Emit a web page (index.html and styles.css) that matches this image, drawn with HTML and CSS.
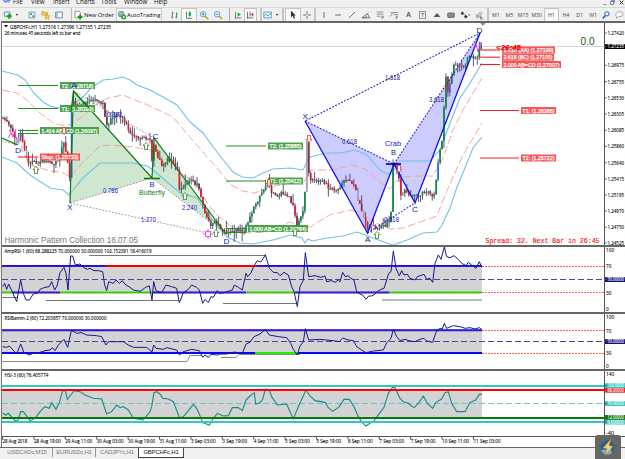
FILE: index.html
```html
<!DOCTYPE html>
<html lang="en">
<head>
<meta charset="utf-8">
<title>GBPCHFc,H1</title>
<link rel="stylesheet" href="styles.css">
</head>
<body>
<div class="app">
  <nav class="menubar">
    <span class="logo"><svg width="10" height="6" viewBox="0 0 10 6"><path d="M0 1L5 0L9 2L7 5H3Z" fill="#a9c6ee"/><path d="M1 2l2 2 3-2 2 1" stroke="#3f78c8" fill="none"/></svg></span>
    <span>File</span><span>View</span><span>Insert</span><span>Charts</span><span>Tools</span><span>Window</span><span>Help</span>
    <span class="window-buttons"><b>_</b><svg width="5" height="5" viewBox="0 0 5 5"><path d="M1.5 1.5V.5h3v2h-1M.5 1.5h3v3h-3z" fill="none" stroke="#55708c" stroke-width=".8"/></svg><svg width="5" height="5" viewBox="0 0 5 5"><path d="M.7 .7l3.6 3.6M4.3 .7L.7 4.3" stroke="#333"/></svg></span>
  </nav>
  <div class="toolbar">
    <div class="group g-new">
      <i><svg viewBox="0 0 12 12"><path d="M1.5 2.5h7v5h-7z" fill="#eef6ff" stroke="#5580a8"/><path d="M4.5 7.5h6M7.500 4.5v6" stroke="#16a716" stroke-width="2.6"/></svg></i><i class="caret"></i>
    </div>
    <div class="group g-views">
      <i><svg viewBox="0 0 12 12"><path d="M2.500 2.500h7v7h-7z" fill="#edf7ff" stroke="#4b9ac7"/><path d="M4 4h2v2H4z" fill="#18a52b"/><path d="M6.500 6.500h2v2h-2z" fill="#dd4133"/></svg></i>
      <i><svg viewBox="0 0 12 12"><path d="M1 2h3l1 1h3v3H1z" fill="#f2cc4c" stroke="#b98b1d" stroke-width=".7"/><path d="M7 5l1 2h3l-2 2 .5 2.500-2.500-1.500-2 1L5.500 8.500 4 7h2z" fill="#f5d64d" stroke="#bc8c15" stroke-width=".6"/></svg></i>
      <i><svg viewBox="0 0 12 12"><path d="M2 2.500h8v7H2z" fill="#fff" stroke="#4175ac"/><path d="M2.500 3h2v6h-2z" fill="#8eb9df"/></svg></i>
    </div>
    <div class="group g-trade">
      <span class="order"><svg viewBox="0 0 12 12"><path d="M2.500 1.500h5l1.500 2v6h-6.500z" fill="#fff" stroke="#888"/><path d="M5.500 8.500h6M8.500 5.500v6" stroke="#13a213" stroke-width="2.400"/></svg><em>New Order</em></span>
      <span class="auto"><svg viewBox="0 0 12 12"><circle cx="5" cy="5" r="3.500" fill="#6faedc" stroke="#44779c" stroke-width=".7"/><path d="M1 5q4-4 8 0z" fill="#e4bd46"/><circle cx="8" cy="8.500" r="3" fill="#22a534"/><path d="M7.200 7l2.500 1.500-2.500 1.500z" fill="#fff"/></svg><em>AutoTrading</em></span>
    </div>
    <div class="group g-chart">
      <i><svg viewBox="0 0 12 12"><path d="M4 2v8M9 3v7M2.500 8.500H4M4 3.500h1.500M7.500 8.500H9M9 4.500h1.500" stroke="#397a45" fill="none"/></svg></i>
      <i class="active"><svg viewBox="0 0 12 12"><path d="M3 2v8h7M7 1.500v7" stroke="#397a45" fill="none"/><path d="M5.500 3h3v4h-3z" fill="#23a84a"/></svg></i>
      <i><svg viewBox="0 0 12 12"><path d="M7 7l4 4" stroke="#d7a41b" stroke-width="2"/><circle cx="5" cy="5" r="3.300" fill="#d9f0ff" stroke="#4e94cb"/><path d="M3.500 5h3M5 3.500v3" stroke="#3679b7"/></svg></i>
      <i><svg viewBox="0 0 12 12"><path d="M7 7l4 4" stroke="#d7a41b" stroke-width="2"/><circle cx="5" cy="5" r="3.300" fill="#d9f0ff" stroke="#4e94cb"/><path d="M3.500 5h3" stroke="#3679b7"/></svg></i>
    </div>
    <div class="group g-shift">
      <i><svg viewBox="0 0 12 12"><path d="M3 2v8M2 9.500h8" stroke="#666"/><path d="M5.500 3v5l4-2.500z" fill="#22ab35"/></svg></i>
      <i class="active"><svg viewBox="0 0 12 12"><path d="M3 2v8M2 9.500h8M6 2v6" stroke="#557"/><path d="M10 3v5L7 5.500z" fill="#bd4434"/></svg></i>
    </div>
    <div class="group g-template"><i><svg viewBox="0 0 12 12"><path d="M1 2.500h9v7H1z" fill="#e4f6ff" stroke="#4194cf"/><path d="M2 7l2-2 2 2 3-3" fill="none" stroke="#269a48"/></svg></i><i class="caret"></i></div>
    <div class="group g-cursor">
      <i class="active"><svg viewBox="0 0 12 12"><path d="M3.500 1v8l2-2 1.500 3.500 1.500-.7L7 6.500h2.500z" fill="#333"/></svg></i>
      <i><svg viewBox="0 0 12 12"><path d="M6 1.500v3.500M6 7v3.500M1.500 6h3.500M7 6h3.500" stroke="#555"/></svg></i>
    </div>
    <div class="group g-draw">
      <i><svg viewBox="0 0 12 12"><path d="M6 2.500v7" stroke="#555"/></svg></i>
      <i><svg viewBox="0 0 12 12"><path d="M2.500 6h7" stroke="#555"/></svg></i>
      <i><svg viewBox="0 0 12 12"><path d="M2.500 9.500l7-7" stroke="#555"/></svg></i>
      <i><svg viewBox="0 0 12 12"><path d="M1 9.500l8-6M1 9.500h10M4 9.500l3-2M8 5l2 4" stroke="#555" fill="none"/></svg></i>
      <i><svg viewBox="0 0 12 12"><path d="M2 2.500h8M2 5h8M2 7.500h5M8.500 11V7.500h2.500M8.500 9h2" stroke="#666" stroke-width=".8" fill="none"/></svg></i>
      <i><svg viewBox="0 0 12 12"><path d="M1 8l3-4M2 3h9M5 5.500h6M8.500 11V7.500h2.500M8.500 9h2" stroke="#666" stroke-width=".8" fill="none"/></svg></i>
      <i class="letter">A</i>
      <i><span class="boxed">T</span></i>
      <i><svg viewBox="0 0 12 12"><path d="M2 8.500L6 3.500l4 5z" fill="#555"/></svg></i>
      <i><svg viewBox="0 0 12 12"><rect x="2" y="3.500" width="8" height="5.500" rx="1" fill="#888" stroke="#666"/></svg></i>
      <i><svg viewBox="0 0 12 12"><path d="M1 4l2-2 1.500 2L3 6zM5 8l2-2 2 2-2 2zM4 5l3 2" fill="#333" stroke="#444" stroke-width=".6"/><path d="M10 5.500h2l-1 1.500z"/></svg></i>
      <i><svg viewBox="0 0 12 12"><path d="M2 9l6-7M4 10l6-7M2 5l4 4M8 7v4h3M8 9h2" stroke="#555" stroke-width=".8" fill="none"/></svg></i>
    </div>
    <div class="group g-period"><i>M1</i><i>M5</i><i>M15</i><i>M30</i><i class="active">H1</i><i>H4</i><i>D1</i><i>W1</i></div>
    <div class="group g-end">
      <i><svg viewBox="0 0 12 12"><path d="M2 10l3-3" stroke="#2f67b7" stroke-width="2"/><circle cx="7" cy="4.500" r="2.500" fill="#fff" stroke="#3e7ad0" stroke-width="1.300"/></svg></i>
      <i><svg viewBox="0 0 12 12"><path d="M2 5q1-3 5-3 4 0 4 3t-4 3H5l-2 2V8Q2 7 2 5z" fill="#fff" stroke="#999"/></svg></i>
    </div>
  </div>
  <main class="charts">
    <svg class="panel price" viewBox="2 23 623 222">
      <path d="M2 46.500H604" stroke="#d4d4d4"/>
      <path d="M480 23h6l-3 3z" fill="#999"/>
      <g fill="#a8d5a8" fill-opacity=".57"><path d="M70 203L73.500 91L152 178Z"/><path d="M152 178L154 138L226 234Z"/></g>
      <g fill="#ccccff"><path d="M305 121L367.500 233L394 164Z"/><path d="M394 164L415 203L480 33Z"/></g>
      <g id="bands" fill="none"></g>
      <g id="candles"></g>
      <g fill="none" stroke="#909090" stroke-dasharray="1.800 1.500" stroke-width=".9"><path d="M70 203L152 178M73.500 91L154 138M70 203L208 233M152 178L226 234M2 141L18 145"/></g>
      <path d="M70 203L73.500 91L152 178L154 138L226 234M2 138L18 145" fill="none" stroke="#107810" stroke-width="1.200"/>
      <path d="M144 178.500H160" stroke="#107810" stroke-width="1.600"/>
      <path d="M305 121L394 164L480 33L305 121M367.500 233L415 203" fill="none" stroke="#2020d8" stroke-width="1.100" stroke-dasharray="1.800 1.500"/>
      <path d="M305 121L367.500 233L394 164L415 203L480 33" fill="none" stroke="#1010f0" stroke-width="1.300"/>
      <path d="M386 164H401" stroke="#0000a8" stroke-width="1.600"/>
      <path d="M8 138l3-5 2 4 3-8M9 130l5 6M474 50l2-6 2 8 3-10" stroke="#e020e0" stroke-width=".8" fill="none"/>
      <g stroke="#e030d8" fill="#fff"><path d="M204.500 230.500l7 7M211.500 230.500l-7 7M208 229v10M203 234h10" stroke-width=".8"/><circle cx="208" cy="234" r="2.800" stroke-width=".9"/></g>
      <g id="tags"></g>
      <g id="arrows" fill="#fff" fill-opacity=".7"></g>
      <g id="notes"></g>
      <path d="M604.500 23V245" stroke="#555"/>
      <g id="prices" class="axis"></g>
    </svg>
    <svg class="panel amp" viewBox="2 247 623 65">
      <path d="M2 266H482V293H2Z" fill="#d3d3d3"/>
      <path d="M2 297.500H17M46 300.500H179M89 255.500H265M223 303.500H297M382 300H482" stroke="#777" fill="none"/>
      <path d="M2 279.500H604" stroke="#4848a0" stroke-dasharray="6 3"/>
      <path d="M482 266.500H604M482 292.500H604" stroke="#f33" stroke-width=".8" stroke-dasharray="2 1"/>
      <path d="M2 266H106M257 266H482M12 292.500H60M153 292.500H246M295 292.500H389" stroke="#1010e0" stroke-width="2"/>
      <path d="M106 266H257" stroke="#f00000" stroke-width="2"/>
      <path d="M2 292.500H12M60 292.500H153M246 292.500H295M389 292.500H482" stroke="#20f000" stroke-width="2"/>
      <path d="M2 266.500H106M257 266.500H482M2 292.500H482" stroke="#c03060" stroke-width=".5" stroke-dasharray="1.500 1"/>
      <g id="amp-line"></g>
      <text class="ui" x="4.500" y="253" textLength="147" lengthAdjust="spacingAndGlyphs">AmpRSI-1 (60) 68.288225 70.000000 30.000000 102.152391 18.416019</text>
      <path d="M604.500 247V312" stroke="#555"/>
      <g id="amp-axis" class="axis"></g>
    </svg>
    <svg class="panel rsi" viewBox="2 314 623 55">
      <path d="M2 330H482V353H2Z" fill="#d3d3d3"/>
      <path d="M2 361.500H187L190 355.500H202M221 357.500H236L239 354.500H300" stroke="#888" fill="none"/>
      <path d="M2 341.500H604" stroke="#4848a0" stroke-dasharray="6 3"/>
      <path d="M482 330.500H604M482 353.500H604" stroke="#f33" stroke-width=".8" stroke-dasharray="2 1"/>
      <path d="M2 330.300H482M2 353H482" stroke="#0808ee" stroke-width="2"/>
      <path d="M255 353H298" stroke="#20f000" stroke-width="2"/>
      <path d="M2 330.500H482" stroke="#c03060" stroke-width=".5" stroke-dasharray="1.500 1"/>
      <g id="rsi-line"></g>
      <text class="ui" x="4.500" y="320" textLength="102" lengthAdjust="spacingAndGlyphs">RSIBamm-2 (60) 72.203657 70.000000 30.000000</text>
      <path d="M604.500 314V369" stroke="#555"/>
      <g id="rsi-axis" class="axis"></g>
    </svg>
    <svg class="panel hsi" viewBox="2 371 623 65">
      <path d="M2 391H482V417H2Z" fill="#d3d3d3"/>
      <path d="M2 403.500H604" stroke="#66cac4" stroke-dasharray="6 3"/>
      <g id="hsi-line"></g>
      <path d="M2 386H604M2 422H604" stroke="#30c8c2" stroke-width="2"/>
      <path d="M2 390H604" stroke="#f00" stroke-width="2"/>
      <path d="M2 418H604" stroke="#087808" stroke-width="2"/>
      <text class="ui" x="4.500" y="377" textLength="44" lengthAdjust="spacingAndGlyphs">HSI-3 (60) 76.405774</text>
      <path d="M604.500 371V436" stroke="#555"/>
      <g id="hsi-axis" class="axis"></g>
    </svg>
    <svg class="panel dates" viewBox="2 437 623 10"><g id="dates" class="axis"></g></svg>
  </main>
  <footer class="tabs">
    <span class="t1">USDCADc,M15</span><span class="t2">EURUSDc,H1</span><span class="t3">CADJPYc,H1</span><span class="t4 selected">GBPCHFc,H1</span>
  </footer>
  <div class="badge"><svg width="26" height="24" viewBox="0 0 26 24"><circle cx="12.500" cy="12.500" r="7" fill="#245f91"/><path d="M6 15a7 7 0 0 0 11 3l-1-4z" fill="#7baed0"/><path d="M16 4L8 13l4 .5-2 7 8-9-4-1z" fill="#f7cc69" stroke="#b4802c" stroke-width=".5"/></svg></div>
</div>
<script src="charts.js"></script>
</body>
</html>
```
FILE: styles.css
```css
* { box-sizing: border-box; }
body { margin: 0; overflow: hidden; background: #f0f0f0; }
.app { position: relative; display: flex; flex-direction: column; width: 625px; height: 459px; font-family: "Open Sans", "Noto Sans", sans-serif; color: #111; background: #f0f0f0; }

.menubar { display: grid; grid-template-columns: 11px 18px 22px 23px 25px 23px 30px 20px 1fr; padding-left: 2px; height: 7px; font-size: 6.2px; line-height: 8px; white-space: nowrap; }
.menubar > span { margin-top: -2px; }
.menubar .window-buttons { display: flex; justify-content: flex-end; gap: 4px; align-items: flex-start; padding-right: 1px; margin-top: 0; }
.window-buttons b { line-height: 3px; }

.toolbar { display: flex; height: 14px; border-top: 1px solid #d8d8d8; font-size: 5.2px; }
.group { display: flex; flex: none; height: 13px; align-items: stretch; }
.group i { display: flex; flex: 1; align-items: center; justify-content: center; font-style: normal; color: #444; min-width: 0; }
.group svg { width: 10px; height: 10px; flex: none; }
.group .active { background: #f9f9f9; border: 1px solid #c4c4c4; border-bottom: 0; }
.group .caret { flex: 0 0 6px; }
.caret::after { content: ""; border: 1.5px solid transparent; border-top: 2px solid #222; margin-top: 2px; }
.g-new { width: 20px; padding-left: 2px; }
.g-views { width: 41px; margin-left: 5px; }
.g-trade { width: 91px; margin-left: 5px; border-left: 1px solid #bbb; padding-left: 1px; font-size: 6px; }
.g-trade span { display: flex; align-items: center; }
.g-trade em { font-style: normal; white-space: nowrap; }
.g-trade .order { width: 43px; gap: 1px; letter-spacing: -.08px; }
.g-trade .auto { width: 46px; gap: 0; background: #f8f8f8; border: 1px solid #ccc; border-bottom: 0; letter-spacing: -.1px; }
.g-chart { width: 58px; margin-left: 5px; }
.g-shift { width: 28px; margin-left: 4px; padding-left: 2px; border-left: 1px solid #aaa; }
.g-template { width: 20px; margin-left: 3px; border-left: 2px solid #c4c4c4; }
.g-cursor { width: 32px; margin-left: 2px; border-left: 2px solid #c4c4c4; padding-left: 1px; }
.g-draw { width: 172px; padding-left: 1px; border-left: 2px solid #c4c4c4; }
.g-period { width: 113px; margin-left: 1px; border-left: 2px solid #c4c4c4; }
.g-end { flex: 1; }
.group .letter { font-size: 7px; font-weight: 600; }
.boxed { border: 1px solid #999; line-height: 6px; padding: 0 1px; font-size: 6px; }

.charts { display: flex; flex-direction: column; width: 623px; margin-left: 2px; height: 426px; border-top: 2px solid #666; box-shadow: -1px 0 #777; background: #fff; }
.panel { display: block; flex: none; width: 623px; overflow: hidden; }
.price { height: 222px; }
.amp { height: 67px; border-top: 2px solid #666; }
.rsi { height: 57px; border-top: 2px solid #666; }
.hsi { height: 67px; border-top: 2px solid #666; }
.dates { height: 11px; border-top: 1px solid #555; }

text { font-family: "Liberation Sans", sans-serif; }
text.ui, .axis text { font-family: "Open Sans", "Noto Sans", sans-serif; font-size: 5.5px; fill: #000; stroke: #000; stroke-width: .1; }
.axis text.inverse { fill: #fff; stroke: #fff; }
.tag { font-size: 5.7px; fill: #fff; stroke: #fff; stroke-width: .25; }
text.mono { font-family: "Liberation Mono", monospace; stroke: #f02020; stroke-width: .15; }

.tabs { display: flex; height: 12px; border-top: 1px solid #666; font-family: "Liberation Sans", sans-serif; font-size: 6px; letter-spacing: -.22px; line-height: 9px; color: #777; }
.tabs span { text-align: center; height: 9px; border-right: 1px solid #999; }
.tabs .t1 { width: 53px; padding-left: 2px; }
.tabs .t2 { width: 43px; }
.tabs .t3 { width: 42px; border-right: 0; }
.tabs .t4 { width: 46px; height: 10px; }
.tabs .selected { color: #111; background: #fff; border: 1px solid #444; border-top: 0; }
.badge { position: absolute; left: 595px; top: 435px; width: 26px; height: 24px; border-radius: 3px 3px 0 0; background: #666; }
```
FILE: charts.js
```js
const NS = 'http://www.w3.org/2000/svg';
const el = (id) => document.getElementById(id);
function add(parent, name, attrs, text) {
  const n = document.createElementNS(NS, name);
  for (const k in attrs) n.setAttribute(k, attrs[k]);
  if (attrs.textLength) n.setAttribute('lengthAdjust', 'spacingAndGlyphs');
  if (text) n.textContent = text;
  parent.appendChild(n);
  return n;
}
const pairs = (s) => s.trim().split(/\s+/).map((p) => p.split(',').map(Number));
// Series are stored in thirds of a pixel, relative to a segment origin.
const seg = (ox, oy, s) => pairs(s).map(([x, y]) => [ox + x / 3, oy + y / 3]);
const line = (parent, pts, attrs) =>
  add(parent, 'polyline', { points: pts.map((p) => p.join(',')).join(' '), fill: 'none', ...attrs });

// Envelope bands
const bands = el('bands');
const blue = { stroke: '#70c0e8', 'stroke-width': 1.1 };
const salmon = { stroke: '#f5a090', 'stroke-width': .9, 'stroke-dasharray': '8 3' };
line(bands, pairs('2,71 18,75 25,80 33,92 43,102 50,106 58,108 72,105 83,97 92,87 103,80 113,79 123,77 130,80 137,85 150,90 163,97 177,105 190,122 203,133 217,152 233,172 242,177 253,178 263,173 273,169 290,168 303,170 307,162 310,157 327,153 340,153 355,150 367,155 380,170 387,174 392,173 400,161 430,161 440,150 450,123 460,98 470,83 482,63'), blue);
line(bands, pairs('2,157 17,163 30,175 50,188 63,190 69,195 83,178 100,163 133,163 147,166 152,169 167,182 180,193 197,198 210,217 227,237 240,243 253,244 273,240 290,235 302,238 305,243 308,239 312,241 327,238 343,236 357,232 370,237 387,243 393,245 407,240 423,233 437,232 442,225 450,208 457,187 467,163 473,148 482,137'), blue);
line(bands, pairs('2,90 17,93 27,100 40,113 53,123 65,126 72,124 85,115 95,105 108,98 123,95 140,102 150,106 173,117 187,134 203,152 217,168 230,184 242,191 255,193 270,187 290,183 303,184 310,170 333,170 353,165 367,170 380,182 390,189 400,177 417,176 433,176 443,158 453,130 463,110 470,98 482,78'), salmon);
line(bands, pairs('20,134 22,150 30,165 47,170 63,173 70,177 83,162 100,146 110,145 133,147 150,150 170,162 183,175 197,183 207,203 217,215 233,228 250,233 267,232 290,222 302,226 310,227 330,215 350,210 360,212 373,222 390,229 403,228 423,221 437,216 443,200 453,177 463,155 482,123'), salmon);

// Candles follow the closing price with a fixed-seed jitter
const closes = pairs('2,120 6,120 10,126 14,134 17,143 20,130 22,140 26,157 30,164 34,161 38,164 42,160 46,163 50,162 54,164 58,160 62,148 64,140 66,155 69,170 70,182 70.9,182 71.5,112 73,98 75,107 80,104 86,104 92,100 98,99 103,104 107,127 110,120 115,117 120,116 124,120 128,130 134,136 140,139 146,138 150,140 153,170 154,145 158,157 162,165 168,158 173,162 177,166 179,190 183,188 186,183 192,181 197,185 200,192 205,213 210,225 215,222 220,228 226,233 232,232 238,230 244,231 248,222 252,212 256,205 260,197 264,190 267,183 272,192 278,195 284,193 290,198 294,210 297,228 300,218 304,210 304.8,208 305,133 308,150 309,180 312,178 318,180 325,183 330,190 338,189 344,180 350,180 354,185 358,200 363,215 367,228 372,226 378,228 384,226 390,222 392,200 393,165 396,170 399,180 401,197 404,190 408,196 414,197 420,195 425,190 430,194 434,197 436,180 438,165 440,148 443,140 445,72 448,92 451,78 454,62 458,65 464,67 468,58 472,56 478,58 480,42 482,47');
function at(pts, x) {
  let i = 1;
  while (i < pts.length - 1 && pts[i][0] < x) i++;
  const [a, b] = [pts[i - 1], pts[i]];
  return a[1] + (b[1] - a[1]) * (x - a[0]) / (b[0] - a[0]);
}
let seed = 11;
const rnd = () => (seed = (seed * 16807) % 2147483647) / 2147483647;
let prev = 119;
const candles = el('candles');
for (let x = 3; x < 483; x += 1.96) {
  const c = at(closes, Math.min(x, 482)) + (rnd() - .5) * 4;
  const top = Math.min(prev, c), bottom = Math.max(prev, c);
  const hi = top - rnd() * rnd() * 11, lo = bottom + rnd() * rnd() * 10;
  add(candles, 'path', { d: `M${x} ${hi}V${lo}`, stroke: '#303058', 'stroke-width': .8 });
  const dim = rnd() > .94;
  const fill = dim ? '#aaa0bb' : c < prev ? (rnd() > .93 ? '#2870f0' : '#0c8c44') : (rnd() > .25 ? '#e81828' : '#803040');
  add(candles, 'rect', { x: x - .85, y: top, width: 1.7, height: Math.max(1, bottom - top), fill });
  prev = c;
}

// Target levels: x, centre y, width, line start, line end, colour, caption
const G = '#3e9c3e', R = '#f84848';
[[60, 85.5, 35, 18, 58, G, 'T2: (1.26718)'], [60, 108.5, 35, 18, 58, G, 'T1: (1.26393)'],
 [40, 130.5, 59, 18, 38, G, '1.414 AB=CD (1.26097)'], [40, 157, 40, 18, 38, R, 'Stop: (1.25733)'],
 [268, 146, 35, 226, 266, G, 'T2: (1.25885)'], [268, 181, 35, 226, 266, G, 'T1: (1.25412)'],
 [248, 228.5, 60, 226, 246, G, '1.000 AB=CD (1.24764)'],
 [502, 50, 53, 480, 500, R, '1.618 (XA) (1.27199)'], [502, 57.2, 52, 480, 500, R, '3.618 (BC) (1.27105)'],
 [502, 64.5, 59, 480, 500, R, '2.000 AB=CD (1.27007)'],
 [521, 110.5, 35, 480, 519, R, 'T1: (1.26368)'], [521, 158, 35, 480, 519, R, 'T2: (1.25722)']
].forEach(([x, y, w, a, b, c, s]) => {
  const g = el('tags');
  add(g, 'path', { d: `M${a} ${y}H${b}`, stroke: c === G ? '#209020' : '#f02020', 'stroke-width': 1.1 });
  add(g, 'rect', { x, y: y - 3.5, width: w, height: 7, fill: c, 'fill-opacity': .93 });
  add(g, 'text', { x: x + 1.5, y: y + 2.1, textLength: w - 3, class: 'tag' }, s);
});
add(el('tags'), 'path', { d: 'M18 133.5H38M226 232.500H246', stroke: '#209020' });
add(el('tags'), 'path', { d: 'M71 112L73.500 91L89 108', fill: 'none', stroke: '#107810', 'stroke-width': 1.2 });

[[36, 170, 1], [146, 146, 1], [185, 196, 1], [216, 233, 1], [377, 235, 1], [295, 232, 1],
 [309, 139, -1], [64, 131, -1], [269, 183, -1], [399, 169, -1]].forEach(([x, y, d]) => {
  add(el('arrows'), 'path', { transform: `translate(${x} ${y}) scale(1 ${d})`, d: 'M0-3.500L3-.5H1.500V3.500H-1.500V-.5H-3Z', stroke: d > 0 ? '#308020' : '#f03030', 'stroke-width': .8 });
});

// Pattern letters and ratios: x, baseline, size, colour, width, text
const B = '#1818d8', N = '#202080';
[[15, 153, 8, B, 6, 'D'], [67, 210, 8, B, 5.5, 'X'], [71, 88, 8, B, 5.5, 'A'], [149.500, 187, 8, B, 5, 'B'],
 [152.500, 138.5, 8, B, 6, 'C'], [223.500, 243.5, 8, B, 6, 'D'], [302.500, 118.500, 8, N, 5.5, 'X'],
 [365, 241.5, 8, N, 5.5, 'A'], [391, 154.5, 8, N, 5, 'B'], [412, 212, 8, N, 6, 'C'], [476.500, 33, 8, N, 6, 'D'],
 [385, 146, 7.4, B, 16, 'Crab'], [139, 194.500, 7.4, '#108010', 26, 'Butterfly'],
 [103, 193, 6.6, B, 15, '0.786'], [141, 222, 6.6, B, 15, '1.270'], [107, 116.500, 6.6, B, 15, '0.382'],
 [182, 209.800, 6.6, B, 15, '2.240'], [342, 144, 6.6, N, 15, '0.618'], [385, 79.500, 6.6, N, 15, '1.618'],
 [429, 101.500, 6.6, N, 15, '3.618'], [384, 221.500, 6.6, N, 15, '0.618'],
 [580.5, 44.5, 10.5, '#106010', 14, '0.0'], [4.5, 243, 8.4, '#777', 133.500, 'Harmonic Pattern Collection 18.07.05']
].forEach(([x, y, size, fill, w, s]) => add(el('notes'), 'text', { x, y, 'font-size': size, fill, textLength: w }, s));
add(el('notes'), 'text', { x: 496, y: 49.500, 'font-size': 7.4, 'font-weight': 'bold', 'font-style': 'italic', fill: '#f00000', textLength: 25 }, '<26:45');
add(el('notes'), 'text', { x: 485.500, y: 242.500, 'font-size': 6.4, fill: '#f02020', textLength: 114, class: 'mono' }, 'Spread: 32. Next Bar in 26:45');
add(el('notes'), 'path', { d: 'M4 25h4l-2 2.500z' });
add(el('notes'), 'text', { x: 10, y: 28.500, class: 'ui', textLength: 101 }, 'GBPCHFc,H1  1.27316 1.27396 1.27135 1.27235');
add(el('notes'), 'text', { x: 4.500, y: 35, class: 'ui', textLength: 76 }, '26 minutes 45 seconds left to bar end');

// Value axes
function axis(id, rows) {
  rows.forEach(([y, s, bg]) => {
    const g = el(id), long = s.length > 5;
    const size = bg && id !== 'prices' ? 4.6 : 5.5;
    if (bg) add(g, 'rect', { x: 605, y: y - 2.3, width: 20, height: 4.8, fill: bg });
    if (long) add(g, 'path', { d: `M605 ${y}h2`, stroke: '#555', 'stroke-width': .8 });
    const t = add(g, 'text', { x: long ? 607.500 : 606, y: y + size * .36, textLength: long ? 16.5 : s.length * 2.7, class: bg ? 'inverse' : '' }, s);
    t.style.fontSize = size + 'px';
  });
}
axis('prices', [[33, '1.27420'], [46.5, '1.27235', '#000'], [65.3, '1.26975'], [81.6, '1.26755'], [97.8, '1.26530'], [114, '1.26305'], [130.3, '1.26085'], [146.5, '1.25860'], [162.7, '1.25640'], [179, '1.25415'], [195, '1.25195'], [211, '1.24970'], [227.3, '1.24750'], [243, '1.24525']]);
axis('amp-axis', [[249.7, '100'], [266.3, '70'], [279.5, '50.00000', '#101080'], [292.7, '30'], [309, '0']]);
axis('rsi-axis', [[317, '100'], [330.7, '70'], [341.5, '50.00000', '#101080'], [353, '30'], [366.5, '0']]);
axis('hsi-axis', [[374, '140'], [390.2, '88.00000', '#f02020'], [385.500, '100.0000', '#30c8c2'], [403.5, '50.00000', '#30c8c2'], [422, '0.000000', '#30c8c2'], [417.300, '12.00000', '#087808'], [433, '-40']]);

['28 Aug 2018', '28 Aug 19:00', '29 Aug 11:00', '30 Aug 03:00', '30 Aug 19:00', '31 Aug 11:00', '3 Sep 03:00', '3 Sep 19:00', '4 Sep 11:00', '5 Sep 03:00', '5 Sep 19:00', '6 Sep 11:00', '7 Sep 03:00', '7 Sep 19:00', '10 Sep 11:00', '11 Sep 03:00'].forEach((s, i) => {
  const x = 2.500 + i * 31.4;
  add(el('dates'), 'path', { d: `M${x} 437v2.500`, stroke: '#555' });
  add(el('dates'), 'text', { x, y: 443, textLength: s.length * 2.25 }, s);
});

// Oscillators
const navy = { stroke: '#181890', 'stroke-width': 1 };
line(el('amp-line'), [
  ...seg(0, 230, '8,170 14,160 20,178 26,162 38,188 50,215 62,150 70,190 78,210 88,210 100,192 115,188 120,178 135,172 148,170 155,155 164,180 172,165 180,128 192,112 198,130 204,180 212,78 218,78 226,105 240,102 250,112 262,118 270,115 282,122 295,122 308,125 314,165 320,182 326,155 340,160 348,150 358,160 367,152 375,163 390,172 400,180 420,184 440,170 448,168 456,210 461,155 468,182 485,188 498,165 515,170 530,175 538,218 550,188 565,178 575,165 590,172 598,180'),
  ...seg(200, 240, '8,190 15,178 25,188 33,170 40,172 52,152 58,160 72,158 80,155 97,150 103,135 115,142 127,150 138,100 143,110 152,100 162,78 172,62 182,66 190,55 196,44 208,85 220,97 232,98 240,107 252,97 265,105 275,140 282,155 292,200 300,140 310,120 316,38 326,110 345,107 362,112 375,108 380,125 395,122 405,127 415,120 420,125 428,97 436,110 445,107 452,115 462,120 470,155 480,162 488,165 498,178 506,168 515,168 525,162 535,152 552,145 560,120 566,100 573,95 580,33 588,85 598,108 605,92 612,105 622,103'),
  ...seg(410, 225, '0,160 15,165 22,155 42,148 50,163 60,160 68,172 75,115 85,90 93,103 103,66 110,95 120,98 132,92 145,103 155,115 168,122 175,112 185,120 198,130 208,110 215,127')], navy);
line(el('rsi-line'), [
  ...seg(0, 230, '8,350 20,352 28,348 50,372 62,342 72,368 88,375 100,370 120,367 135,362 150,360 157,353 165,362 175,345 192,328 203,352 214,302 222,305 230,310 245,308 260,315 290,317 305,320 318,345 325,335 350,335 370,335 385,345 400,352 440,352 456,366 461,345 468,355 490,358 500,353 530,360 538,375 550,365 575,358 598,362'),
  ...seg(200, 240, '8,352 15,345 25,352 33,343 52,345 60,342 80,342 103,336 127,340 138,312 150,307 162,290 180,282 196,268 208,285 235,290 260,293 272,310 280,328 292,345 300,318 310,305 316,266 326,300 360,298 378,300 400,302 418,305 428,294 445,300 460,302 470,320 485,330 498,338 520,333 550,330 560,308 573,295 580,268 590,290 600,302 615,298'),
  ...seg(410, 225, '0,348 15,350 30,343 42,340 50,348 68,352 78,322 88,310 97,312 103,295 110,310 130,302 150,305 165,310 180,308 195,312 208,308 215,313')], navy);
line(el('hsi-line'), [
  ...seg(0, 230, '8,550 18,555 25,550 45,572 55,570 62,545 70,545 90,572 105,565 120,545 135,530 148,535 155,518 168,538 178,518 188,482 196,482 202,508 215,492 222,482 240,485 255,495 280,505 305,507 320,552 335,545 350,525 360,533 370,530 385,540 400,565 430,570 450,545 455,530 462,488 470,485 480,492 488,505 505,507 520,515 538,562 548,562 560,548 580,523 590,535 602,562'),
  ...seg(200, 240, '8,548 28,555 38,538 52,520 70,528 85,527 97,503 115,503 127,512 138,480 150,468 163,458 167,492 180,488 188,478 196,447 208,450 215,470 232,495 260,492 272,520 280,537 295,500 318,450 330,468 345,482 375,487 385,503 398,514 418,500 432,478 448,478 462,500 475,530 487,548 498,558 510,550 520,545 540,518 552,502 565,460 577,443 585,443 600,475 610,485 625,490'),
  ...seg(410, 225, '0,540 12,548 25,535 40,513 52,535 68,550 78,532 95,522 105,503 115,500 125,535 140,560 165,560 180,532 197,525 208,508 215,508')], { stroke: '#108c8c', 'stroke-width': 1.1 });
```
